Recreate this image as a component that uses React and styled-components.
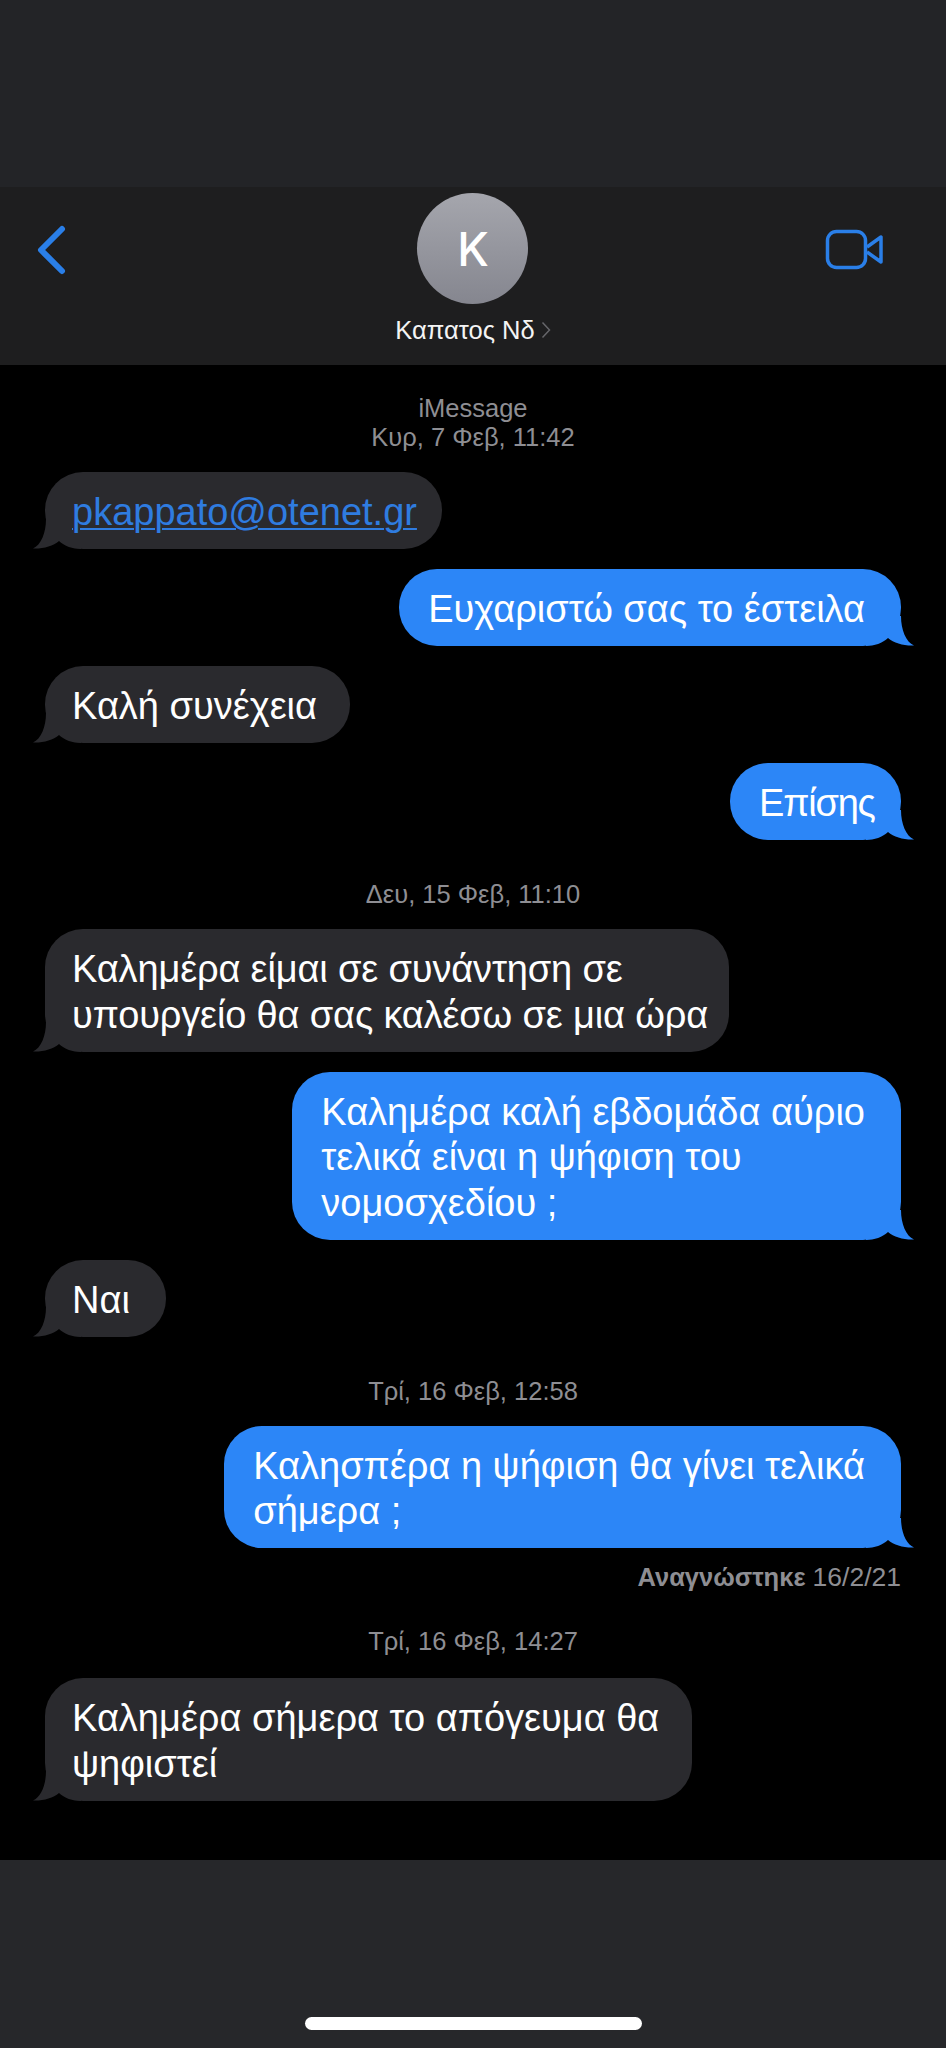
import React from "react";
import styled, { createGlobalStyle } from "styled-components";

const Global = createGlobalStyle`
  html, body { margin: 0; padding: 0; background: #000; }
  * { box-sizing: border-box; }
`;
const FONT = `"Liberation Sans", Arial, sans-serif`;

const Page = styled.div`
  width: 946px; height: 2048px; display: flex; flex-direction: column;
  background: #000; font-family: ${FONT}; overflow: hidden;
`;
const StatusArea = styled.div`height: 187px; background: #232427; flex: none;`;
const Header = styled.header`
  height: 178px; flex: none; background: #1e1e1f; display: grid; grid-template-columns: 1fr auto 1fr;
  align-items: start; padding: 0 36px;
`;
const BackBtn = styled.div`margin-top: 38px; width: 30px; height: 50px; justify-self: start;`;
const VideoBtn = styled.div`margin: 41px 26px 0 0; width: 60px; height: 44px; justify-self: end;`;
const Contact = styled.div`
  display: flex; flex-direction: column; align-items: center; margin-top: 6px; color: #fff;
`;
const Avatar = styled.div`
  width: 111px; height: 111px; border-radius: 50%;
  background: linear-gradient(#a5a6ad, #85868f);
  display: flex; align-items: center; justify-content: center;
  font-family: Inter, sans-serif; font-size: 46px; font-weight: 500; color: #fff;
`;
const ContactName = styled.div`
  margin-top: 11px; display: flex; align-items: center; gap: 6px; font-size: 25.5px; line-height: 30px;
  color: #f4f4f4;
`;
const Thread = styled.main`
  flex: 1; display: flex; flex-direction: column; padding: 29px 45px 0 45px;
`;
const Stamp = styled.div`
  align-self: center; text-align: center; color: #8e8e93; font-size: 25.5px; line-height: 29px;
  margin-top: ${p => p.$top}px;
`;
const Bubble = styled.div`
  position: relative; align-self: ${p => (p.$me ? "flex-end" : "flex-start")};
  width: ${p => (p.$width ? `${p.$width}px` : "auto")};
  background: ${p => (p.$me ? "#2c86f7" : "#2a2a2e")}; color: #fff;
  border-radius: 38px; padding: ${p => (p.$me ? "18px 36px 13.5px 29px" : "18px 28px 13.5px 27px")};
  font-size: 38px; line-height: 45.5px; letter-spacing: ${p => p.$spacing ?? 0}px;
  margin-top: ${p => p.$top ?? 20}px; white-space: pre;
`;
const BubbleText = styled.span`position: relative; z-index: 1;`;
const Tail = styled.svg`
  position: absolute; bottom: 0; width: 48px; height: 30px;
  ${p => (p.$me ? "right: -13px;" : "left: -12px; transform: scaleX(-1);")}
`;
const Mail = styled.span`color: #2f7ce0; text-decoration: underline; text-underline-offset: 3px; text-decoration-thickness: 2px;`;
const Read = styled.div`
  align-self: flex-end; margin-top: 15px; color: #8e8e93; font-size: 25.5px; line-height: 28px; font-weight: 700;
  span { font-weight: 400; font-size: 26.5px; }
`;
const Footer = styled.footer`
  height: 188px; flex: none; background: #26272a; display: flex; align-items: flex-end; justify-content: center;
  padding-bottom: 18px;
`;
const HomeBar = styled.div`width: 337px; height: 13px; border-radius: 7px; background: #fff;`;

function Msg({ me, top, width, spacing, children }) {
  return (
    <Bubble $me={me} $top={top} $width={width} $spacing={spacing}>
      <BubbleText>{children}</BubbleText>
      <Tail $me={me} viewBox="0 0 48 30">
        <path
          d="M35 0 C35 14 40 26 48 29.5 C38 30 28 27 22 22 C17 27 8 30 0 30 L0 0 Z"
          fill={me ? "#2c86f7" : "#2a2a2e"}
        />
      </Tail>
    </Bubble>
  );
}

export default function App() {
  return (
    <Page>
      <Global />
      <StatusArea />
      <Header>
        <BackBtn>
          <svg width="30" height="50" viewBox="0 0 30 50" fill="none">
            <path d="M26 4 L5 25 L26 46" stroke="#2a7fe8" strokeWidth="6" strokeLinecap="round" strokeLinejoin="round" />
          </svg>
        </BackBtn>
        <Contact>
          <Avatar>K</Avatar>
          <ContactName>
            Καπατος Νδ
            <svg width="10" height="18" viewBox="0 0 10 18" fill="none">
              <path d="M1.5 1.5 L8.5 9 L1.5 16.5" stroke="#66666a" strokeWidth="1.5" />
            </svg>
          </ContactName>
        </Contact>
        <VideoBtn>
          <svg width="60" height="44" viewBox="0 0 60 44" fill="none" stroke="#2a7fe8" strokeWidth="3.5" strokeLinejoin="round">
            <rect x="3.5" y="3.5" width="38" height="36" rx="9" />
            <path d="M43 19 L57 9 V34 L43 24" />
          </svg>
        </VideoBtn>
      </Header>
      <Thread>
        <Stamp $top={0}>iMessage<br />Κυρ, 7 Φεβ, 11:42</Stamp>
        <Msg width={397}><Mail>pkappato@otenet.gr</Mail></Msg>
        <Msg me>Ευχαριστώ σας το έστειλα</Msg>
        <Msg width={305}>Καλή συνέχεια</Msg>
        <Msg me width={171} spacing={-1.2}>Επίσης</Msg>
        <Stamp $top={40}>Δευ, 15 Φεβ, 11:10</Stamp>
        <Msg width={684} spacing={-0.15}>{"Καλημέρα είμαι σε συνάντηση σε\nυπουργείο θα σας καλέσω σε μια ώρα"}</Msg>
        <Msg me>{"Καλημέρα καλή εβδομάδα αύριο\nτελικά είναι η ψήφιση του\nνομοσχεδίου ;"}</Msg>
        <Msg width={121}>Ναι</Msg>
        <Stamp $top={40}>Τρί, 16 Φεβ, 12:58</Stamp>
        <Msg me>{"Καλησπέρα η ψήφιση θα γίνει τελικά\nσήμερα ;"}</Msg>
        <Read>Αναγνώστηκε <span>16/2/21</span></Read>
        <Stamp $top={36}>Τρί, 16 Φεβ, 14:27</Stamp>
        <Msg top={22} width={647}>{"Καλημέρα σήμερα το απόγευμα θα\nψηφιστεί"}</Msg>
      </Thread>
      <Footer><HomeBar /></Footer>
    </Page>
  );
}
